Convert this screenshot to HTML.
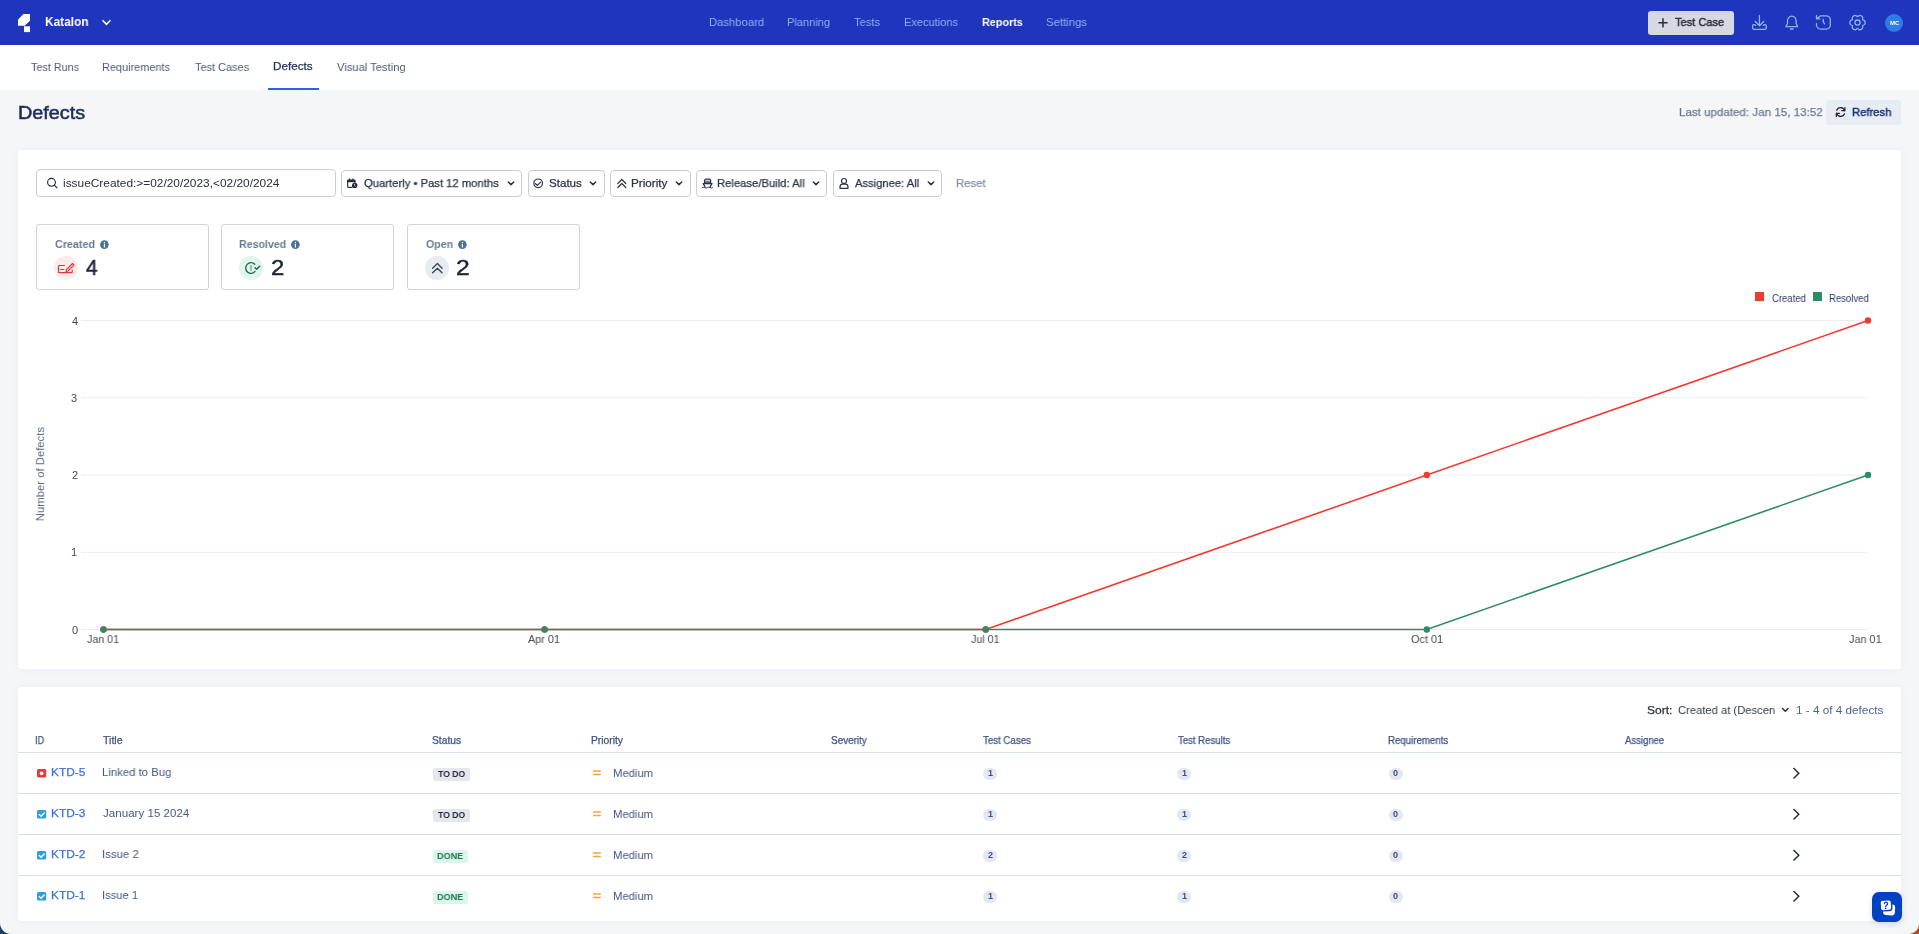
<!DOCTYPE html><html><head><meta charset="utf-8"><style>html,body{margin:0;padding:0;width:1919px;height:934px;overflow:hidden;position:relative;background:#F4F5F7}.t{position:absolute;white-space:nowrap;line-height:1;will-change:transform;font-family:"Liberation Sans",sans-serif;transform-origin:0 0}</style></head><body>
<div style="position:absolute;left:0;top:0;width:1919px;height:45px;background:#1F35BD"></div>
<svg style="position:absolute;left:0;top:0" width="120" height="45"><polygon fill="#fff" points="23.5,14 30,14 30,20.8 24.6,25.7 18,25.7 18,19.6"/><rect fill="#fff" x="24" y="26.3" width="6" height="5.8"/><polyline fill="none" stroke="#fff" stroke-width="1.6" points="102.5,20.3 106.5,24.3 110.5,20.3"/></svg>
<div style="position:absolute;left:1648px;top:11px;width:86px;height:24px;background:#D6D9E1;border-radius:3px"></div>
<svg style="position:absolute;left:1655px;top:15px" width="16" height="16"><path d="M8,3.2V12.4M3.4,7.8H12.6" stroke="#2A2E36" stroke-width="1.5" fill="none"/></svg>
<svg style="position:absolute;left:0;top:0" width="1919" height="45" fill="none" stroke="#8DB4F6" stroke-width="1.3" stroke-linecap="round" stroke-linejoin="round">
<path d="M1759.4,15.5V25.6M1755.3,21.5L1759.4,25.7L1763.7,21.5"/>
<path d="M1755.6,25.4A1.6,1.6 0 0 0 1752.6,26.3V27.8A1.6,1.6 0 0 0 1754.2,29.4H1764.7A1.6,1.6 0 0 0 1766.3,27.8V26.3A1.6,1.6 0 0 0 1763.3,25.4"/>
<path d="M1785.8,26.7H1797.7L1796.1,23.5V21A4.3,4.6 0 0 0 1791.8,16.2A4.3,4.6 0 0 0 1787.5,21V23.5Z"/>
<path d="M1790.5,29H1793.1" stroke-width="1.5"/>
<path d="M1816.5,23.6V25A4.1,4.1 0 0 0 1820.6,29.1H1826.2A4.1,4.1 0 0 0 1830.3,25V19.9A4.1,4.1 0 0 0 1826.2,15.8H1820.6L1817,18.5"/>
<path d="M1816.5,15.4V18.8H1819.9"/>
<path d="M1823.2,19.5Q1823,22.5 1824.5,23.8" stroke-width="1.5"/>
<path d="M1864.81,20.91 C1865.17,21.69 1865.17,23.51 1864.81,24.29 C1864.44,25.06 1862.98,24.92 1862.61,25.55 C1862.24,26.18 1863.10,27.38 1862.61,28.09 C1862.13,28.79 1860.55,29.70 1859.69,29.77 C1858.84,29.84 1858.23,28.50 1857.50,28.50 C1856.77,28.50 1856.16,29.84 1855.31,29.77 C1854.45,29.70 1852.87,28.79 1852.39,28.09 C1851.90,27.38 1852.76,26.18 1852.39,25.55 C1852.02,24.92 1850.56,25.06 1850.19,24.29 C1849.83,23.51 1849.83,21.69 1850.19,20.91 C1850.56,20.14 1852.02,20.28 1852.39,19.65 C1852.76,19.02 1851.90,17.82 1852.39,17.11 C1852.87,16.41 1854.45,15.50 1855.31,15.43 C1856.16,15.36 1856.77,16.70 1857.50,16.70 C1858.23,16.70 1858.84,15.36 1859.69,15.43 C1860.55,15.50 1862.13,16.41 1862.61,17.11 C1863.10,17.82 1862.24,19.02 1862.61,19.65 C1862.98,20.28 1864.44,20.14 1864.81,20.91Z"/>
<circle cx="1857.5" cy="22.6" r="2.6"/>
</svg>
<div style="position:absolute;left:1885px;top:14px;width:18px;height:18px;border-radius:50%;background:#2F7CE9"></div>
<div style="position:absolute;left:0;top:45px;width:1919px;height:45px;background:#fff"></div>
<div style="position:absolute;left:268px;top:87.5px;width:51px;height:2.5px;background:#2A62EE"></div>
<div style="position:absolute;left:0;top:90px;width:1919px;height:844px;background:#F5F6F8"></div>
<div style="position:absolute;left:1826px;top:100px;width:75px;height:25px;background:#E6EBF4;border-radius:4px"></div>
<svg style="position:absolute;left:-0.7px;top:0" width="1919" height="140" fill="none" stroke="#1A1F2B" stroke-width="1.2" stroke-linecap="round" stroke-linejoin="round"><path d="M1845.6,110.6A4.2,4.2 0 0 0 1837.7,110.2M1837.6,113.4A4.2,4.2 0 0 0 1845.5,113.8"/><path d="M1845.9,107.6V110.7H1842.8M1837.3,116.4V113.3H1840.4"/></svg>
<div style="position:absolute;left:18px;top:150px;width:1883px;height:518.5px;background:#fff;border-radius:3px;box-shadow:0 0 10px rgba(30,40,70,0.045)"></div>
<div style="position:absolute;box-sizing:border-box;left:36px;top:169px;width:300px;height:28px;border:1px solid #C9CED6;border-radius:4px;background:#fff"></div>
<svg style="position:absolute;left:36px;top:170px" width="30" height="26" fill="none" stroke="#1E2A44" stroke-width="1.15" stroke-linecap="round"><circle cx="15.5" cy="12.3" r="3.9"/><path d="M18.4,15.2L21,17.8"/></svg>
<div style="position:absolute;box-sizing:border-box;left:341px;top:170px;width:181px;height:27px;border:1px solid #C9CED6;border-radius:4px;background:#fff"></div>
<svg style="position:absolute;left:506.2px;top:178px" width="10" height="10" fill="none" stroke="#2B3344" stroke-width="1.5" stroke-linecap="round" stroke-linejoin="round"><path d="M2.3,4L5,6.6L7.7,4"/></svg>
<div style="position:absolute;box-sizing:border-box;left:528px;top:170px;width:77px;height:27px;border:1px solid #C9CED6;border-radius:4px;background:#fff"></div>
<svg style="position:absolute;left:588.2px;top:178px" width="10" height="10" fill="none" stroke="#2B3344" stroke-width="1.5" stroke-linecap="round" stroke-linejoin="round"><path d="M2.3,4L5,6.6L7.7,4"/></svg>
<div style="position:absolute;box-sizing:border-box;left:610px;top:170px;width:81px;height:27px;border:1px solid #C9CED6;border-radius:4px;background:#fff"></div>
<svg style="position:absolute;left:674.2px;top:178px" width="10" height="10" fill="none" stroke="#2B3344" stroke-width="1.5" stroke-linecap="round" stroke-linejoin="round"><path d="M2.3,4L5,6.6L7.7,4"/></svg>
<div style="position:absolute;box-sizing:border-box;left:696px;top:170px;width:131px;height:27px;border:1px solid #C9CED6;border-radius:4px;background:#fff"></div>
<svg style="position:absolute;left:811.2px;top:178px" width="10" height="10" fill="none" stroke="#2B3344" stroke-width="1.5" stroke-linecap="round" stroke-linejoin="round"><path d="M2.3,4L5,6.6L7.7,4"/></svg>
<div style="position:absolute;box-sizing:border-box;left:833px;top:170px;width:109px;height:27px;border:1px solid #C9CED6;border-radius:4px;background:#fff"></div>
<svg style="position:absolute;left:925.9000000000001px;top:178px" width="10" height="10" fill="none" stroke="#2B3344" stroke-width="1.5" stroke-linecap="round" stroke-linejoin="round"><path d="M2.3,4L5,6.6L7.7,4"/></svg>
<svg style="position:absolute;left:0;top:0" width="1000" height="200" fill="none" stroke="#2B3344" stroke-width="1.2" stroke-linecap="round" stroke-linejoin="round">
<path d="M352,187.3H348.4A0.7,0.7 0 0 1 347.7,186.6V180.8A0.7,0.7 0 0 1 348.4,180.1H354.2A0.7,0.7 0 0 1 354.9,180.8V182.5"/><rect x="347.2" y="180" width="8.2" height="2.2" fill="#1E2638" stroke="none"/><path d="M349.6,179V180.5M352.9,179V180.5" stroke-width="1.3"/>
<circle cx="354.7" cy="185.4" r="2.7" fill="#1E2638" stroke="none"/><path d="M354.5,184.3V185.5L355.4,186.2" stroke="#fff" stroke-width="0.7"/>
<circle cx="538.2" cy="183.3" r="4.3"/><path d="M535.5,183.7L537.4,185.3L540.6,182.1"/>
<path d="M617.8,183.5L621.8,179.5L625.8,183.5M617.8,187.5L621.8,183.5L625.8,187.5"/>
<path d="M704.6,182.8V180.6A1.4,1.4 0 0 1 706,179.2H709.2A1.4,1.4 0 0 1 710.6,180.6V182.8Z" stroke-width="1.3"/><path d="M705.8,181.2H709.4" stroke-width="0.9"/><path d="M703.2,183.6L705,186.6M712,183.6L710.2,186.6M703.2,183.6H712" stroke-width="1.2"/><path d="M702.2,187.6Q703.5,186.8 704.8,187.6T707.4,187.6T710,187.6T712.4,187.6" stroke-width="1"/>
<circle cx="844" cy="181" r="2.5"/><path d="M840,188.3V187A2.8,2.8 0 0 1 842.8,184.2H845.2A2.8,2.8 0 0 1 848,187V188.3Z"/>
</svg>
<div style="position:absolute;box-sizing:border-box;left:36px;top:224px;width:173px;height:66px;border:1px solid #CFD3DA;border-radius:3px;background:#fff"></div>
<svg style="position:absolute;left:100.1px;top:240px" width="10" height="10"><circle cx="4.4" cy="4.6" r="4.3" fill="#4C7195"/><rect x="3.8" y="3.9" width="1.2" height="3.6" fill="#fff"/><rect x="3.8" y="2" width="1.2" height="1.2" fill="#fff"/></svg>
<div style="position:absolute;left:54.2px;top:256px;width:24px;height:24px;border-radius:50%;background:#FDEBEC"></div>
<div style="position:absolute;box-sizing:border-box;left:221px;top:224px;width:173px;height:66px;border:1px solid #CFD3DA;border-radius:3px;background:#fff"></div>
<svg style="position:absolute;left:291.3px;top:240px" width="10" height="10"><circle cx="4.4" cy="4.6" r="4.3" fill="#4C7195"/><rect x="3.8" y="3.9" width="1.2" height="3.6" fill="#fff"/><rect x="3.8" y="2" width="1.2" height="1.2" fill="#fff"/></svg>
<div style="position:absolute;left:239.2px;top:256px;width:24px;height:24px;border-radius:50%;background:#E0F5EC"></div>
<div style="position:absolute;box-sizing:border-box;left:407px;top:224px;width:173px;height:66px;border:1px solid #CFD3DA;border-radius:3px;background:#fff"></div>
<svg style="position:absolute;left:457.5px;top:240px" width="10" height="10"><circle cx="4.4" cy="4.6" r="4.3" fill="#4C7195"/><rect x="3.8" y="3.9" width="1.2" height="3.6" fill="#fff"/><rect x="3.8" y="2" width="1.2" height="1.2" fill="#fff"/></svg>
<div style="position:absolute;left:425.2px;top:256px;width:24px;height:24px;border-radius:50%;background:#E9EBF3"></div>
<svg style="position:absolute;left:0;top:0" width="600" height="300" fill="none" stroke-linecap="round" stroke-linejoin="round">
<path d="M64.5,265.5H59.2A0.7,0.7 0 0 0 58.5,266.2V272A0.7,0.7 0 0 0 59.2,272.7H71.5A0.7,0.7 0 0 0 72.2,272V270" stroke="#E0353B" stroke-width="1.2"/>
<path d="M66.5,269.5L72.5,263.5L74,265L68,271L66,271.5Z M60.5,269.5H64" stroke="#E0353B" stroke-width="1.1"/>
<path d="M254.75,264.25A5.3,5.3 0 1 0 255.06,271.41" stroke="#17664A" stroke-width="1.3"/>
<path d="M251,265.6V268.8M251,270.2V270.6" stroke="#4C9A7C" stroke-width="1.2"/>
<path d="M255,267.7L256.6,269.2L259.7,266.3" stroke="#17664A" stroke-width="1.4"/>
<path d="M432.6,268.2L437.4,263.6L442,268.2M432.6,272.8L437.4,268.2L442,272.8" stroke="#3B4760" stroke-width="1.4"/>
</svg>
<svg style="position:absolute;left:0;top:0" width="1919" height="700"><line x1="81" y1="629.5" x2="1868" y2="629.5" stroke="#EDEDED" stroke-width="1"/><line x1="81" y1="552.3" x2="1868" y2="552.3" stroke="#EDEDED" stroke-width="1"/><line x1="81" y1="475.0" x2="1868" y2="475.0" stroke="#EDEDED" stroke-width="1"/><line x1="81" y1="397.8" x2="1868" y2="397.8" stroke="#EDEDED" stroke-width="1"/><line x1="81" y1="320.5" x2="1868" y2="320.5" stroke="#EDEDED" stroke-width="1"/><polyline fill="none" stroke="#F03B2F" stroke-width="1.6" points="103.5,629.5 544.6,629.5 985.7,629.5 1426.8,475.0 1868,320.5"/><circle cx="103.5" cy="629.5" r="3.2" fill="#F03B2F"/><circle cx="544.6" cy="629.5" r="3.2" fill="#F03B2F"/><circle cx="985.7" cy="629.5" r="3.2" fill="#F03B2F"/><circle cx="1426.8" cy="475.0" r="3.2" fill="#F03B2F"/><circle cx="1868" cy="320.5" r="3.2" fill="#F03B2F"/><polyline fill="none" stroke="#2E8C64" stroke-width="1.6" points="103.5,629.5 544.6,629.5 985.7,629.5 1426.8,629.5 1868,475.0"/><circle cx="103.5" cy="629.5" r="3.2" fill="#2E8C64"/><circle cx="544.6" cy="629.5" r="3.2" fill="#2E8C64"/><circle cx="985.7" cy="629.5" r="3.2" fill="#2E8C64"/><circle cx="1426.8" cy="629.5" r="3.2" fill="#2E8C64"/><circle cx="1868" cy="475.0" r="3.2" fill="#2E8C64"/><rect x="1755" y="292" width="9" height="9" fill="#F03B2F"/><rect x="1813" y="292" width="9" height="9" fill="#2E8C64"/></svg>
<div style="position:absolute;left:-6px;top:469px;width:93px;text-align:center;transform:rotate(-90deg);font:400 11.3px/1 'Liberation Sans',sans-serif;color:#5E6F86;white-space:nowrap">Number of Defects</div>
<div style="position:absolute;left:18px;top:687px;width:1883px;height:234.3px;background:#fff;border-radius:3px;box-shadow:0 0 10px rgba(30,40,70,0.045)"></div>
<svg style="position:absolute;left:1780px;top:705px" width="10" height="10" fill="none" stroke="#2A2F3A" stroke-width="1.5" stroke-linecap="round" stroke-linejoin="round"><path d="M2.5,3.5L5.3,6.2L8.1,3.5"/></svg>
<div style="position:absolute;left:18px;top:752px;width:1883px;height:1px;background:#D9DFE7"></div>
<div style="position:absolute;left:18px;top:793px;width:1883px;height:1px;background:#D9DFE7"></div>
<div style="position:absolute;left:18px;top:834px;width:1883px;height:1px;background:#D9DFE7"></div>
<div style="position:absolute;left:18px;top:875px;width:1883px;height:1px;background:#D9DFE7"></div>
<svg style="position:absolute;left:36.9px;top:768.8px" width="10" height="10"><rect x="0" y="0" width="9.2" height="8.6" rx="1.5" fill="#E5393B"/><circle cx="4.6" cy="4.3" r="1.9" fill="#fff"/></svg>
<div style="position:absolute;left:433px;top:768.0px;width:37px;height:12.6px;border-radius:2.5px;background:#E4E7ED"></div>
<svg style="position:absolute;left:592px;top:768.5px" width="10" height="8"><path d="M1,2H8.8M1,5.5H8.8" stroke="#F5A53C" stroke-width="1.6"/></svg>
<div style="position:absolute;left:983.1px;top:767.8px;width:13.8px;height:12.4px;border-radius:6.5px;background:#E3E7F0"></div>
<div style="position:absolute;left:1177.1px;top:767.8px;width:13.8px;height:12.4px;border-radius:6.5px;background:#E3E7F0"></div>
<div style="position:absolute;left:1388.8px;top:767.8px;width:13.8px;height:12.4px;border-radius:6.5px;background:#E3E7F0"></div>
<svg style="position:absolute;left:1790px;top:766.5px" width="12" height="13"><path d="M3.5,1L8.8,6.3L3.5,11.5" fill="none" stroke="#1C2538" stroke-width="1.4"/></svg>
<svg style="position:absolute;left:36.9px;top:809.8px" width="10" height="10"><rect x="0" y="0" width="9.2" height="8.6" rx="1.5" fill="#2E9FDD"/><path d="M2.3,4.6L4,6.3L7.2,2.9" fill="none" stroke="#fff" stroke-width="1.4" stroke-linecap="round"/></svg>
<div style="position:absolute;left:433px;top:809.0px;width:37px;height:12.6px;border-radius:2.5px;background:#E4E7ED"></div>
<svg style="position:absolute;left:592px;top:809.5px" width="10" height="8"><path d="M1,2H8.8M1,5.5H8.8" stroke="#F5A53C" stroke-width="1.6"/></svg>
<div style="position:absolute;left:983.1px;top:808.8px;width:13.8px;height:12.4px;border-radius:6.5px;background:#E3E7F0"></div>
<div style="position:absolute;left:1177.1px;top:808.8px;width:13.8px;height:12.4px;border-radius:6.5px;background:#E3E7F0"></div>
<div style="position:absolute;left:1388.8px;top:808.8px;width:13.8px;height:12.4px;border-radius:6.5px;background:#E3E7F0"></div>
<svg style="position:absolute;left:1790px;top:807.5px" width="12" height="13"><path d="M3.5,1L8.8,6.3L3.5,11.5" fill="none" stroke="#1C2538" stroke-width="1.4"/></svg>
<svg style="position:absolute;left:36.9px;top:850.8px" width="10" height="10"><rect x="0" y="0" width="9.2" height="8.6" rx="1.5" fill="#2E9FDD"/><path d="M2.3,4.6L4,6.3L7.2,2.9" fill="none" stroke="#fff" stroke-width="1.4" stroke-linecap="round"/></svg>
<div style="position:absolute;left:433px;top:850.0px;width:34.7px;height:12.6px;border-radius:2.5px;background:#DCF5EA"></div>
<svg style="position:absolute;left:592px;top:850.5px" width="10" height="8"><path d="M1,2H8.8M1,5.5H8.8" stroke="#F5A53C" stroke-width="1.6"/></svg>
<div style="position:absolute;left:983.1px;top:849.8px;width:13.8px;height:12.4px;border-radius:6.5px;background:#E3E7F0"></div>
<div style="position:absolute;left:1177.1px;top:849.8px;width:13.8px;height:12.4px;border-radius:6.5px;background:#E3E7F0"></div>
<div style="position:absolute;left:1388.8px;top:849.8px;width:13.8px;height:12.4px;border-radius:6.5px;background:#E3E7F0"></div>
<svg style="position:absolute;left:1790px;top:848.5px" width="12" height="13"><path d="M3.5,1L8.8,6.3L3.5,11.5" fill="none" stroke="#1C2538" stroke-width="1.4"/></svg>
<svg style="position:absolute;left:36.9px;top:891.8px" width="10" height="10"><rect x="0" y="0" width="9.2" height="8.6" rx="1.5" fill="#2E9FDD"/><path d="M2.3,4.6L4,6.3L7.2,2.9" fill="none" stroke="#fff" stroke-width="1.4" stroke-linecap="round"/></svg>
<div style="position:absolute;left:433px;top:891.0px;width:34.7px;height:12.6px;border-radius:2.5px;background:#DCF5EA"></div>
<svg style="position:absolute;left:592px;top:891.5px" width="10" height="8"><path d="M1,2H8.8M1,5.5H8.8" stroke="#F5A53C" stroke-width="1.6"/></svg>
<div style="position:absolute;left:983.1px;top:890.8px;width:13.8px;height:12.4px;border-radius:6.5px;background:#E3E7F0"></div>
<div style="position:absolute;left:1177.1px;top:890.8px;width:13.8px;height:12.4px;border-radius:6.5px;background:#E3E7F0"></div>
<div style="position:absolute;left:1388.8px;top:890.8px;width:13.8px;height:12.4px;border-radius:6.5px;background:#E3E7F0"></div>
<svg style="position:absolute;left:1790px;top:889.5px" width="12" height="13"><path d="M3.5,1L8.8,6.3L3.5,11.5" fill="none" stroke="#1C2538" stroke-width="1.4"/></svg>
<div style="position:absolute;left:1872px;top:892px;width:30px;height:30px;border-radius:7px;background:#0042C3;box-shadow:0 2px 6px rgba(0,0,0,0.12)"></div>
<svg style="position:absolute;left:1872px;top:892px" width="30" height="30"><rect x="11.2" y="12.4" width="11.8" height="10.8" rx="3" fill="#fff" transform="rotate(4 17 18)"/><rect x="8.2" y="7.9" width="11.4" height="10.8" rx="2.6" fill="#fff" stroke="#0042C3" stroke-width="1.4" transform="rotate(-4 14 13)"/><path d="M12.4,11.6A1.6,1.6 0 1 1 14.6,13.2C14,13.6 13.8,13.9 13.8,14.6" fill="none" stroke="#0042C3" stroke-width="1.3" stroke-linecap="round"/><circle cx="13.7" cy="16.4" r="0.8" fill="#0042C3"/></svg>
<svg style="position:absolute;left:0;top:923px" width="11" height="11"><path d="M0,0V11H11A11,11 0 0 1 0,0Z" fill="#173E6E"/></svg>
<svg style="position:absolute;left:1909px;top:924px" width="10" height="10"><path d="M10,0V10H0A10,10 0 0 0 10,0Z" fill="#B9461F"/></svg>
<div class="t" id="t0" style="left:44.70px;top:14.90px;font-size:13.2px;font-weight:700;color:#fff;transform:scaleX(0.9021);">Katalon</div>
<div class="t" id="t1" style="left:708.63px;top:16.10px;font-size:11.6px;font-weight:400;color:#8DB4F6;transform:scaleX(0.9709);">Dashboard</div>
<div class="t" id="t2" style="left:786.85px;top:16.10px;font-size:11.6px;font-weight:400;color:#8DB4F6;transform:scaleX(0.9523);">Planning</div>
<div class="t" id="t3" style="left:854.00px;top:16.10px;font-size:11.6px;font-weight:400;color:#8DB4F6;transform:scaleX(0.9630);">Tests</div>
<div class="t" id="t4" style="left:903.95px;top:16.10px;font-size:11.6px;font-weight:400;color:#8DB4F6;transform:scaleX(0.9518);">Executions</div>
<div class="t" id="t5" style="left:981.87px;top:16.10px;font-size:11.6px;font-weight:700;color:#fff;transform:scaleX(0.9333);">Reports</div>
<div class="t" id="t6" style="left:1045.62px;top:16.10px;font-size:11.6px;font-weight:400;color:#8DB4F6;transform:scaleX(0.9780);">Settings</div>
<div class="t" id="t7" style="left:1675.30px;top:16.00px;font-size:11.6px;font-weight:400;color:#2A2E36;transform:scaleX(0.9549);-webkit-text-stroke:0.45px currentColor;">Test Case</div>
<div class="t" id="t8" style="left:1889.60px;top:19.90px;font-size:6px;font-weight:700;color:#fff;">MC</div>
<div class="t" id="t9" style="left:30.60px;top:62.00px;font-size:11.4px;font-weight:400;color:#4A5A77;transform:scaleX(0.9500);">Test Runs</div>
<div class="t" id="t10" style="left:102.24px;top:62.00px;font-size:11.4px;font-weight:400;color:#4A5A77;transform:scaleX(0.9586);">Requirements</div>
<div class="t" id="t11" style="left:195.20px;top:62.00px;font-size:11.4px;font-weight:400;color:#4A5A77;transform:scaleX(0.9607);">Test Cases</div>
<div class="t" id="t12" style="left:273.08px;top:61.10px;font-size:11.4px;font-weight:500;color:#22335A;transform:scaleX(1.0243);-webkit-text-stroke:0.25px currentColor;">Defects</div>
<div class="t" id="t13" style="left:337.00px;top:62.00px;font-size:11.4px;font-weight:400;color:#4A5A77;transform:scaleX(0.9826);">Visual Testing</div>
<div class="t" id="t14" style="left:17.55px;top:103.80px;font-size:18.8px;font-weight:400;color:#1F2D59;transform:scaleX(1.0548);-webkit-text-stroke:0.55px currentColor;">Defects</div>
<div class="t" id="t15" style="left:1679.26px;top:105.90px;font-size:11.7px;font-weight:500;color:#6C7A8E;transform:scaleX(0.9906);-webkit-text-stroke:0.25px currentColor;">Last updated: Jan 15, 13:52</div>
<div class="t" id="t16" style="left:1851.94px;top:105.90px;font-size:11.7px;font-weight:400;color:#1C3070;transform:scaleX(0.9615);-webkit-text-stroke:0.45px currentColor;">Refresh</div>
<div class="t" id="t17" style="left:62.67px;top:176.90px;font-size:11.6px;font-weight:400;color:#2A2F3A;transform:scaleX(1.0252);">issueCreated:&gt;=02/20/2023,&lt;02/20/2024</div>
<div class="t" id="t18" style="left:364.00px;top:176.50px;font-size:11.6px;font-weight:500;color:#2B3344;transform:scaleX(0.9712);-webkit-text-stroke:0.25px currentColor;">Quarterly • Past 12 months</div>
<div class="t" id="t19" style="left:549.00px;top:176.50px;font-size:11.6px;font-weight:500;color:#2B3344;-webkit-text-stroke:0.25px currentColor;">Status</div>
<div class="t" id="t20" style="left:631.29px;top:176.50px;font-size:11.6px;font-weight:500;color:#2B3344;transform:scaleX(1.0114);-webkit-text-stroke:0.25px currentColor;">Priority</div>
<div class="t" id="t21" style="left:717.33px;top:176.50px;font-size:11.6px;font-weight:500;color:#2B3344;transform:scaleX(0.9719);-webkit-text-stroke:0.25px currentColor;">Release/Build: All</div>
<div class="t" id="t22" style="left:855.00px;top:176.50px;font-size:11.6px;font-weight:500;color:#2B3344;transform:scaleX(0.9659);-webkit-text-stroke:0.25px currentColor;">Assignee: All</div>
<div class="t" id="t23" style="left:956.02px;top:176.50px;font-size:11.6px;font-weight:500;color:#8190A2;transform:scaleX(0.9793);-webkit-text-stroke:0.25px currentColor;">Reset</div>
<div class="t" id="t24" style="left:54.70px;top:239.30px;font-size:11.3px;font-weight:700;color:#687B93;transform:scaleX(0.9500);">Created</div>
<div class="t" id="t25" style="left:86.30px;top:257.20px;font-size:22px;font-weight:400;color:#1B2438;transform:scaleX(0.9500);-webkit-text-stroke:0.45px currentColor;">4</div>
<div class="t" id="t26" style="left:238.76px;top:239.30px;font-size:11.3px;font-weight:700;color:#687B93;transform:scaleX(0.9408);">Resolved</div>
<div class="t" id="t27" style="left:270.71px;top:257.20px;font-size:22px;font-weight:400;color:#1B2438;transform:scaleX(1.0900);-webkit-text-stroke:0.45px currentColor;">2</div>
<div class="t" id="t28" style="left:425.70px;top:239.30px;font-size:11.3px;font-weight:700;color:#687B93;transform:scaleX(0.9393);">Open</div>
<div class="t" id="t29" style="left:455.68px;top:257.20px;font-size:22px;font-weight:400;color:#1B2438;transform:scaleX(1.1200);-webkit-text-stroke:0.45px currentColor;">2</div>
<div class="t" id="t30" style="left:72.00px;top:624.50px;font-size:11px;font-weight:400;color:#4A4A4A;">0</div>
<div class="t" id="t31" style="left:71.00px;top:547.30px;font-size:11px;font-weight:400;color:#4A4A4A;">1</div>
<div class="t" id="t32" style="left:72.00px;top:470.00px;font-size:11px;font-weight:400;color:#4A4A4A;">2</div>
<div class="t" id="t33" style="left:71.00px;top:392.80px;font-size:11px;font-weight:400;color:#4A4A4A;">3</div>
<div class="t" id="t34" style="left:72.00px;top:315.50px;font-size:11px;font-weight:400;color:#4A4A4A;">4</div>
<div class="t" id="t35" style="left:86.70px;top:634.00px;font-size:11.3px;font-weight:400;color:#4A4A4A;transform:scaleX(0.9441);">Jan 01</div>
<div class="t" id="t36" style="left:528.10px;top:634.00px;font-size:11.3px;font-weight:400;color:#4A4A4A;transform:scaleX(0.9576);">Apr 01</div>
<div class="t" id="t37" style="left:971.00px;top:634.00px;font-size:11.3px;font-weight:400;color:#4A4A4A;transform:scaleX(0.9467);">Jul 01</div>
<div class="t" id="t38" style="left:1410.50px;top:634.00px;font-size:11.3px;font-weight:400;color:#4A4A4A;transform:scaleX(0.9636);">Oct 01</div>
<div class="t" id="t39" style="left:1849.00px;top:634.00px;font-size:11.3px;font-weight:400;color:#4A4A4A;transform:scaleX(0.9588);">Jan 01</div>
<div class="t" id="t40" style="left:1771.70px;top:294.00px;font-size:10px;font-weight:400;color:#2F3B63;transform:scaleX(0.9514);">Created</div>
<div class="t" id="t41" style="left:1828.85px;top:294.00px;font-size:10px;font-weight:400;color:#2F3B63;transform:scaleX(0.9550);">Resolved</div>
<div class="t" id="t42" style="left:1647.47px;top:704.00px;font-size:11.6px;font-weight:500;color:#2A2F3A;transform:scaleX(1.0348);-webkit-text-stroke:0.25px currentColor;">Sort:</div>
<div class="t" id="t43" style="left:1677.53px;top:704.00px;font-size:11.6px;font-weight:400;color:#333A46;transform:scaleX(0.9667);">Created at (Descen</div>
<div class="t" id="t44" style="left:1795.59px;top:704.00px;font-size:11.6px;font-weight:400;color:#4A6590;transform:scaleX(1.0118);">1 - 4 of 4 defects</div>
<div class="t" id="t45" style="left:35.28px;top:736.10px;font-size:10px;font-weight:500;color:#3E5283;transform:scaleX(0.9222);-webkit-text-stroke:0.25px currentColor;">ID</div>
<div class="t" id="t46" style="left:103.20px;top:736.10px;font-size:10px;font-weight:500;color:#3E5283;transform:scaleX(1.0556);-webkit-text-stroke:0.25px currentColor;">Title</div>
<div class="t" id="t47" style="left:432.07px;top:736.10px;font-size:10px;font-weight:500;color:#3E5283;transform:scaleX(1.0259);-webkit-text-stroke:0.25px currentColor;">Status</div>
<div class="t" id="t48" style="left:590.97px;top:736.10px;font-size:10px;font-weight:500;color:#3E5283;transform:scaleX(1.0267);-webkit-text-stroke:0.25px currentColor;">Priority</div>
<div class="t" id="t49" style="left:831.31px;top:736.10px;font-size:10px;font-weight:500;color:#3E5283;transform:scaleX(0.9914);-webkit-text-stroke:0.25px currentColor;">Severity</div>
<div class="t" id="t50" style="left:983.30px;top:736.10px;font-size:10px;font-weight:500;color:#3E5283;transform:scaleX(0.9673);-webkit-text-stroke:0.25px currentColor;">Test Cases</div>
<div class="t" id="t51" style="left:1178.30px;top:736.10px;font-size:10px;font-weight:500;color:#3E5283;transform:scaleX(0.9574);-webkit-text-stroke:0.25px currentColor;">Test Results</div>
<div class="t" id="t52" style="left:1388.03px;top:736.10px;font-size:10px;font-weight:500;color:#3E5283;transform:scaleX(0.9672);-webkit-text-stroke:0.25px currentColor;">Requirements</div>
<div class="t" id="t53" style="left:1625.00px;top:736.10px;font-size:10px;font-weight:500;color:#3E5283;transform:scaleX(0.9512);-webkit-text-stroke:0.25px currentColor;">Assignee</div>
<div class="t" id="t54" style="left:50.68px;top:766.00px;font-size:11.6px;font-weight:500;color:#3A70E3;transform:scaleX(1.0250);-webkit-text-stroke:0.25px currentColor;">KTD-5</div>
<div class="t" id="t55" style="left:102.22px;top:766.00px;font-size:11.6px;font-weight:400;color:#44577D;transform:scaleX(0.9783);">Linked to Bug</div>
<div class="t" id="t56" style="left:438.00px;top:769.00px;font-size:9.6px;font-weight:700;color:#1E2533;transform:scaleX(0.9000);">TO DO</div>
<div class="t" id="t57" style="left:612.53px;top:766.50px;font-size:11.6px;font-weight:400;color:#44577D;transform:scaleX(0.9725);">Medium</div>
<div class="t" id="t58" style="left:987.50px;top:769.20px;font-size:9.0px;font-weight:700;color:#3C5084;">1</div>
<div class="t" id="t59" style="left:1181.50px;top:769.20px;font-size:9.0px;font-weight:700;color:#3C5084;">1</div>
<div class="t" id="t60" style="left:1393.20px;top:769.20px;font-size:9.0px;font-weight:700;color:#3C5084;">0</div>
<div class="t" id="t61" style="left:50.68px;top:807.00px;font-size:11.6px;font-weight:500;color:#3A70E3;transform:scaleX(1.0250);-webkit-text-stroke:0.25px currentColor;">KTD-3</div>
<div class="t" id="t62" style="left:103.20px;top:807.00px;font-size:11.6px;font-weight:400;color:#44577D;transform:scaleX(0.9977);">January 15 2024</div>
<div class="t" id="t63" style="left:438.00px;top:810.00px;font-size:9.6px;font-weight:700;color:#1E2533;transform:scaleX(0.9000);">TO DO</div>
<div class="t" id="t64" style="left:612.53px;top:807.50px;font-size:11.6px;font-weight:400;color:#44577D;transform:scaleX(0.9725);">Medium</div>
<div class="t" id="t65" style="left:987.50px;top:810.20px;font-size:9.0px;font-weight:700;color:#3C5084;">1</div>
<div class="t" id="t66" style="left:1181.50px;top:810.20px;font-size:9.0px;font-weight:700;color:#3C5084;">1</div>
<div class="t" id="t67" style="left:1393.20px;top:810.20px;font-size:9.0px;font-weight:700;color:#3C5084;">0</div>
<div class="t" id="t68" style="left:50.68px;top:848.00px;font-size:11.6px;font-weight:500;color:#3A70E3;transform:scaleX(1.0250);-webkit-text-stroke:0.25px currentColor;">KTD-2</div>
<div class="t" id="t69" style="left:102.22px;top:848.00px;font-size:11.6px;font-weight:400;color:#44577D;transform:scaleX(0.9833);">Issue 2</div>
<div class="t" id="t70" style="left:436.86px;top:851.00px;font-size:9.6px;font-weight:700;color:#1B7A53;transform:scaleX(0.9444);">DONE</div>
<div class="t" id="t71" style="left:612.53px;top:848.50px;font-size:11.6px;font-weight:400;color:#44577D;transform:scaleX(0.9725);">Medium</div>
<div class="t" id="t72" style="left:987.50px;top:851.20px;font-size:9.0px;font-weight:700;color:#3C5084;">2</div>
<div class="t" id="t73" style="left:1181.50px;top:851.20px;font-size:9.0px;font-weight:700;color:#3C5084;">2</div>
<div class="t" id="t74" style="left:1393.20px;top:851.20px;font-size:9.0px;font-weight:700;color:#3C5084;">0</div>
<div class="t" id="t75" style="left:50.68px;top:889.00px;font-size:11.6px;font-weight:500;color:#3A70E3;transform:scaleX(1.0250);-webkit-text-stroke:0.25px currentColor;">KTD-1</div>
<div class="t" id="t76" style="left:102.24px;top:889.00px;font-size:11.6px;font-weight:400;color:#44577D;transform:scaleX(0.9639);">Issue 1</div>
<div class="t" id="t77" style="left:436.86px;top:892.00px;font-size:9.6px;font-weight:700;color:#1B7A53;transform:scaleX(0.9444);">DONE</div>
<div class="t" id="t78" style="left:612.53px;top:889.50px;font-size:11.6px;font-weight:400;color:#44577D;transform:scaleX(0.9725);">Medium</div>
<div class="t" id="t79" style="left:987.50px;top:892.20px;font-size:9.0px;font-weight:700;color:#3C5084;">1</div>
<div class="t" id="t80" style="left:1181.50px;top:892.20px;font-size:9.0px;font-weight:700;color:#3C5084;">1</div>
<div class="t" id="t81" style="left:1393.20px;top:892.20px;font-size:9.0px;font-weight:700;color:#3C5084;">0</div>
</body></html>
